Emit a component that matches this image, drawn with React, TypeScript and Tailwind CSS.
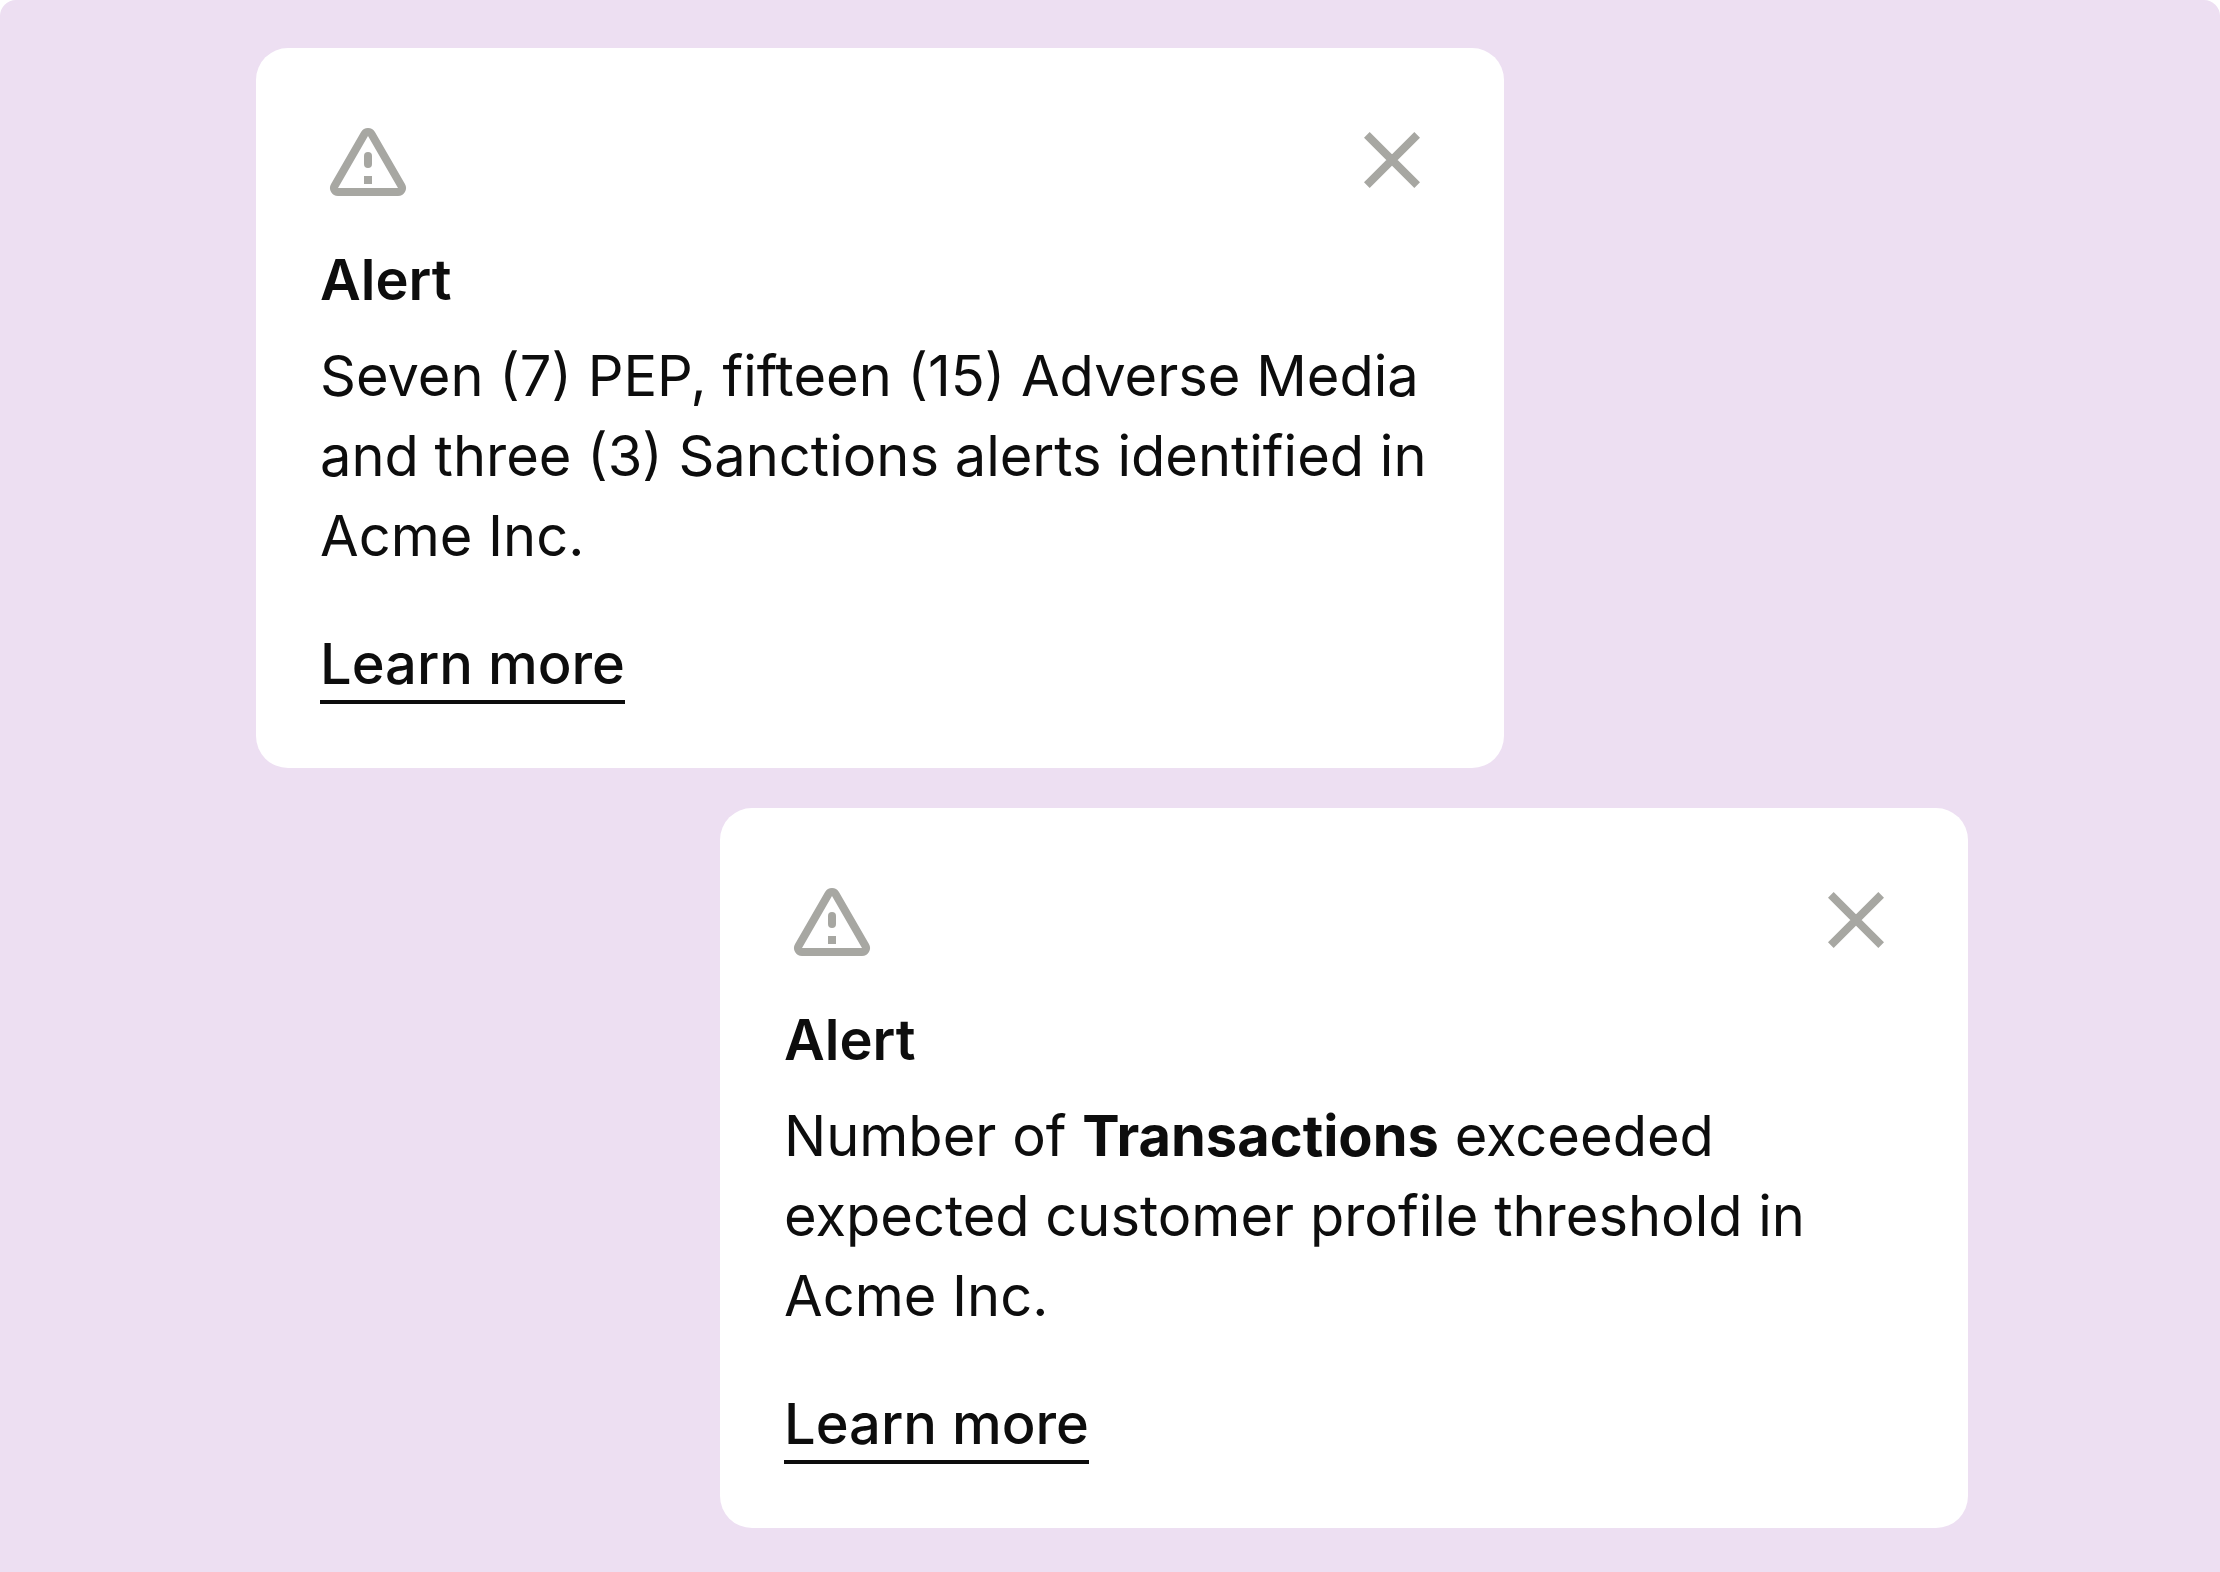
import type { ReactNode } from 'react'

function WarningIcon() {
    return (
        <svg viewBox="0 0 96 96" className="block size-24 fill-[#a7a7a2]" aria-hidden="true">
            <path
                fillRule="evenodd"
                d="M11.07 72 41.07 20A8 8 0 0 1 54.93 20L84.93 72A8 8 0 0 1 78 84H18A8 8 0 0 1 11.07 72ZM18 76H78L48 24Z"
            />
            <rect x="44" y="40" width="8" height="16" rx="4" />
            <rect x="44" y="64" width="8" height="8" />
        </svg>
    )
}

function CloseIcon() {
    return (
        <svg viewBox="0 0 96 96" className="block size-24 stroke-[#a7a7a2]" aria-hidden="true">
            <path d="M22.83 22.83 73.17 73.17M73.17 22.83 22.83 73.17" strokeWidth="8" />
        </svg>
    )
}

function AlertCard({ className, children }: { className: string; children: ReactNode }) {
    return (
        <section className={`w-[1248px] max-w-full rounded-[32px] bg-white p-16 ${className}`}>
            <div className="flex justify-between">
                <WarningIcon />
                <button type="button" aria-label="Close">
                    <CloseIcon />
                </button>
            </div>
            <h2 className="mt-8 font-semibold">Alert</h2>
            <p className="mt-4">{children}</p>
            <div className="mt-13 flex">
                <a href="#" className="border-b-4 border-[#0d0d0d] leading-[72px] font-medium">
                    Learn more
                </a>
            </div>
        </section>
    )
}

export default function App() {
    return (
        <main className="flex min-h-screen flex-col gap-10 rounded-t-2xl bg-[#eddff2] pt-12 pr-[252px] pb-11 pl-64 font-['Inter',sans-serif] text-[56px] leading-[80px] text-[#0d0d0d]">
            <AlertCard className="self-start">
                Seven (7) PEP, fifteen (15) Adverse Media and three (3) Sanctions alerts identified in Acme Inc.
            </AlertCard>
            <AlertCard className="self-end">
                Number of <strong className="font-bold">Transactions</strong> exceeded expected customer profile threshold in Acme Inc.
            </AlertCard>
        </main>
    )
}
